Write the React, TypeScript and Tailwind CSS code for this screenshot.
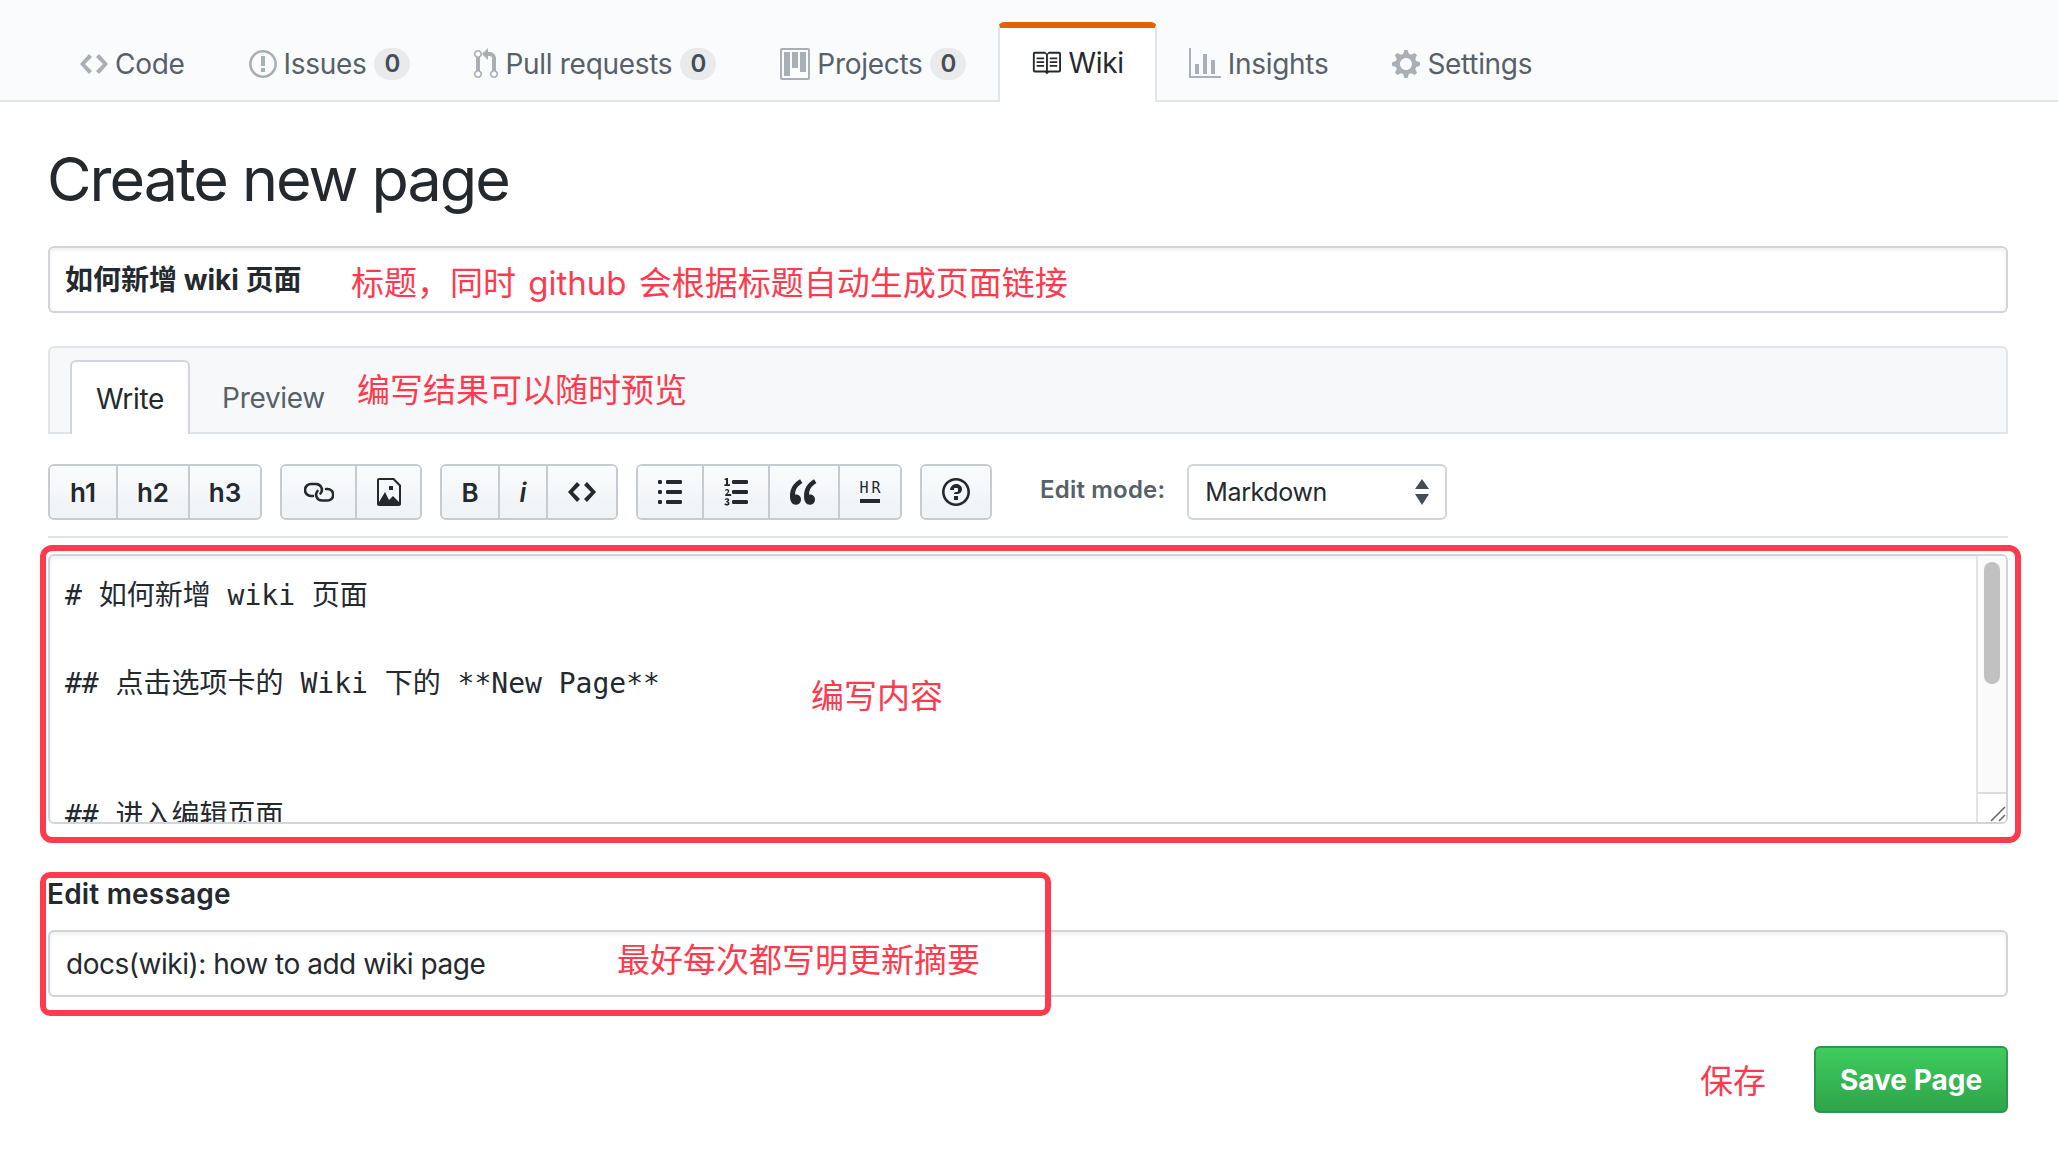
import React from "react";

const P = {
  code: "M9.5 3L8 4.5 11.5 8 8 11.5 9.5 13 14 8 9.5 3zm-5 0L0 8l4.5 5L6 11.5 2.5 8 6 4.5 4.5 3z",
  issue: "M7 2.3c3.14 0 5.7 2.56 5.7 5.7s-2.56 5.7-5.7 5.7A5.71 5.71 0 011.3 8c0-3.14 2.56-5.7 5.7-5.7zM7 1C3.14 1 0 4.14 0 8s3.14 7 7 7 7-3.14 7-7-3.14-7-7-7zm1 3H6v5h2V4zm0 6H6v2h2v-2z",
  pull: "M11 11.28V5c-.03-.78-.34-1.47-.94-2.06C9.46 2.35 8.78 2.03 8 2H7V0L4 3l3 3V4h1c.27.02.48.11.69.31.21.2.3.42.31.69v6.28A1.993 1.993 0 0010 15a1.993 1.993 0 001-3.72zm-1 2.92c-.66 0-1.2-.55-1.2-1.2 0-.65.55-1.2 1.2-1.2.65 0 1.2.55 1.2 1.2 0 .65-.55 1.2-1.2 1.2zM4 3c0-1.11-.89-2-2-2a1.993 1.993 0 00-1 3.72v6.56A1.993 1.993 0 002 15a1.993 1.993 0 001-3.72V4.72c.59-.34 1-.98 1-1.72zm-.8 10c0 .66-.55 1.2-1.2 1.2-.65 0-1.2-.55-1.2-1.2 0-.65.55-1.2 1.2-1.2.65 0 1.2.55 1.2 1.2zM2 4.2C1.34 4.2.8 3.65.8 3c0-.65.55-1.2 1.2-1.2.65 0 1.2.55 1.2 1.2 0 .65-.55 1.2-1.2 1.2z",
  project: "M10 12h3V2h-3v10zm-4-2h3V2H6v8zm-4 4h3V2H2v12zm-1 1h13V1H1v14zM14 0H1a1 1 0 00-1 1v14a1 1 0 001 1h13a1 1 0 001-1V1a1 1 0 00-1-1z",
  book: "M3 5h4v1H3V5zm0 3h4V7H3v1zm0 2h4V9H3v1zm11-5h-4v1h4V5zm0 2h-4v1h4V7zm0 2h-4v1h4V9zm2-6v9c0 .55-.45 1-1 1H9.5l-1 1-1-1H2c-.55 0-1-.45-1-1V3c0-.55.45-1 1-1h5.5l1 1 1-1H15c.55 0 1 .45 1 1zm-8 .5L7.5 3H2v9h6V3.5zm7-.5H9.5l-.5.5V12h6V3z",
  graph: "M16 14v1H0V0h1v14h15zM5 13H3V8h2v5zm4 0H7V3h2v10zm4 0h-2V6h2v7z",
  gear: "M14 8.77v-1.6l-1.94-.64-.45-1.09.88-1.84-1.13-1.13-1.81.91-1.09-.45-.69-1.92h-1.6l-.63 1.94-1.11.45-1.84-.88-1.13 1.13.91 1.81-.45 1.09L0 7.23v1.59l1.94.64.45 1.09-.88 1.84 1.13 1.13 1.81-.91 1.09.45.69 1.92h1.59l.63-1.94 1.11-.45 1.84.88 1.13-1.13-.92-1.81.47-1.09L14 8.75v.02zM7 11c-1.66 0-3-1.34-3-3s1.34-3 3-3 3 1.34 3 3-1.34 3-3 3z",
  media: "M6 5h2v2H6V5zm6-.5V14c0 .55-.45 1-1 1H1c-.55 0-1-.45-1-1V2c0-.55.45-1 1-1h7.5L12 4.5zM11 5L8 2H1v11l3-5 2 4 2-2 3 3V5z",
  ul: "M2 13c0 .59 0 1-.59 1H.59C0 14 0 13.59 0 13c0-.59 0-1 .59-1h.81c.59 0 .59.41.59 1H2zm2.59-9h6.81c.59 0 .59-.41.59-1 0-.59 0-1-.59-1H4.59C4 2 4 2.41 4 3c0 .59 0 1 .59 1zM1.41 7H.59C0 7 0 7.41 0 8c0 .59 0 1 .59 1h.81c.59 0 .59-.41.59-1 0-.59 0-1-.59-1h.01zm0-5H.59C0 2 0 2.41 0 3c0 .59 0 1 .59 1h.81c.59 0 .59-.41.59-1 0-.59 0-1-.59-1h.01zm10 5H4.59C4 7 4 7.41 4 8c0 .59 0 1 .59 1h6.81c.59 0 .59-.41.59-1 0-.59 0-1-.59-1h.01zm0 5H4.59C4 12 4 12.41 4 13c0 .59 0 1 .59 1h6.81c.59 0 .59-.41.59-1 0-.59 0-1-.59-1h.01z",
  ol: "M12.01 13c0 .59 0 1-.59 1H4.6c-.59 0-.59-.41-.59-1 0-.59 0-1 .59-1h6.81c.59 0 .59.41.59 1h.01zM4.6 4h6.81C12 4 12 3.59 12 3c0-.59 0-1-.59-1H4.6c-.59 0-.59.41-.59 1 0 .59 0 1 .59 1zm6.81 3H4.6c-.59 0-.59.41-.59 1 0 .59 0 1 .59 1h6.81c.59 0 .59-.41.59-1 0-.59 0-1-.59-1zm-9.4-6h-.72c-.3.19-.58.25-1.03.34V2h.75v2.14H.17V5h2.84v-.86h-1V1zm.19 8.06c-.17 0-.42.02-.61.05.48-.5 1.02-1.06 1.02-1.61-.02-.61-.44-1-1.06-1-.47 0-.77.16-1.08.48l.48.48c.16-.16.33-.3.53-.3.27 0 .44.16.44.44 0 .44-.61 1-1.33 1.69V10h3v-.94h-.39zm-.2 3.84v-.02c.44-.2.66-.48.66-.86 0-.61-.5-.94-1.2-.94-.42 0-.78.17-1.13.44l.45.53c.22-.19.42-.3.64-.3.25 0 .39.12.39.34 0 .25-.19.42-.75.42v.67c.67 0 .83.17.83.45 0 .25-.22.38-.55.38-.28 0-.55-.14-.78-.36l-.41.56c.3.34.72.55 1.3.55.72 0 1.31-.38 1.31-1.05 0-.45-.3-.72-.75-.81z",
  quote: "M6.16 3.5C3.73 5.06 2.55 6.67 2.55 9.36c.16-.05.3-.05.44-.05 1.27 0 2.5.86 2.5 2.41 0 1.61-1.03 2.61-2.5 2.61-1.9 0-2.99-1.52-2.99-4.25 0-3.8 1.75-6.53 5.02-8.42L6.16 3.5zm7 0c-2.43 1.56-3.61 3.17-3.61 5.86.16-.05.3-.05.44-.05 1.27 0 2.5.86 2.5 2.41 0 1.61-1.03 2.61-2.5 2.61-1.89 0-2.98-1.52-2.98-4.25 0-3.8 1.75-6.53 5.02-8.42l1.14 1.84h-.01z",
  question: "M6 10h2v2H6v-2zm4-3.5C10 8.64 8 9 8 9H6c0-.55.45-1 1-1h.5c.28 0 .5-.22.5-.5v-1c0-.28-.22-.5-.5-.5h-1c-.28 0-.5.22-.5.5V7H4c0-1.5 1.5-3 3-3s3 1 3 2.5zM7 2.3c3.14 0 5.7 2.56 5.7 5.7S10.14 13.7 7 13.7 1.3 11.14 1.3 8 3.86 2.3 7 2.3zM7 1C3.14 1 0 4.14 0 8s3.14 7 7 7 7-3.14 7-7-3.14-7-7-7z",
};

function Oct({ d, vw, w, h, className }: { d: string; vw: number; w: number; h: number; className: string }) {
  return (
    <svg viewBox={`0 0 ${vw} 16`} width={w} height={h} className={className} fill="currentColor">
      <path d={d} fillRule="evenodd" />
    </svg>
  );
}

function Tab({ d, vw, w, label, count, active }: { d: string; vw: number; w: number; label: string; count?: string; active?: boolean }) {
  return (
    <div
      className={
        active
          ? "flex h-[80px] items-center gap-[7px] rounded-t-[6px] border-x-2 border-t-[6px] border-x-[#e1e4e8] border-t-[#e36209] bg-white px-[31px] pb-[4px] -mb-[2px] text-[#24292e]"
          : "flex h-[80px] items-center gap-[7px] px-[32px] pt-[10px] pb-[2px] text-[#586069]"
      }
    >
      <Oct d={d} vw={vw} w={w} h={32} className={active ? "text-[#24292e]" : "text-[#a9afb6]"} />
      <span className="text-[28px] leading-[36px] tracking-[-0.3px]">{label}</span>
      {count && (
        <span className="ml-[1px] flex h-[32px] w-[36px] items-center justify-center rounded-full bg-[#e9eaec] text-[24px] font-semibold text-[#444d56]">
          {count}
        </span>
      )}
    </div>
  );
}

const btn =
  "flex h-full items-center justify-center border-r-2 border-[#c6cbd1] bg-gradient-to-b from-[#fafbfc] to-[#eff3f6] text-[26px] font-semibold text-[#24292e] last:border-r-0";

function Group({ children }: { children: React.ReactNode }) {
  return <div className="flex h-[56px] overflow-hidden rounded-[6px] border-2 border-[#c6cbd1]">{children}</div>;
}

const red = "text-[33px] leading-[40px] text-[#fe3b4e] font-normal";

export default function App() {
  return (
    <div className="min-h-[1154px] w-[2058px] bg-white font-['Inter','Noto_Sans_CJK_SC',sans-serif] text-[#24292e]">
      <div className="flex h-[102px] items-end border-b-2 border-[#e1e4e8] bg-[#fafbfc] pl-[48px]">
        <Tab d={P.code} vw={14} w={28} label="Code" />
        <Tab d={P.issue} vw={14} w={28} label="Issues" count="0" />
        <Tab d={P.pull} vw={12} w={24} label="Pull requests" count="0" />
        <Tab d={P.project} vw={15} w={30} label="Projects" count="0" />
        <Tab d={P.book} vw={16} w={30} label="Wiki" active />
        <Tab d={P.graph} vw={16} w={32} label="Insights" />
        <Tab d={P.gear} vw={14} w={28} label="Settings" />
      </div>

      <div className="relative pl-[48px] pr-[50px]">
        <h1 className="-ml-[1px] flex h-[144px] items-center pt-[12px] text-[61px] font-normal tracking-[-2px] text-[#24292e]">
          Create new page
        </h1>

        <div className="flex h-[67px] items-center rounded-[6px] border-2 border-[#d1d5da] bg-white pl-[15px] shadow-[inset_0_2px_4px_rgba(27,31,35,0.075)]">
          <span className="w-[286px] text-[28px] font-bold">如何新增 wiki 页面</span>
          <span className={red + " pt-[7px] [word-spacing:3px]"}>标题，同时 github 会根据标题自动生成页面链接</span>
        </div>

        <div className="mt-[33px] flex h-[88px] items-end rounded-t-[6px] border-2 border-[#e1e4e8] bg-[#f6f8fa] pl-[20px]">
          <div className="-mb-[2px] flex h-[74px] w-[120px] items-center justify-center rounded-t-[6px] border-x-2 border-t-2 border-[#d1d5da] bg-white pt-[2px] text-[28px] tracking-[-0.3px]">
            Write
          </div>
          <div className="flex h-[74px] w-[167px] items-center justify-center pt-[6px] text-[28px] tracking-[-0.3px] text-[#586069]">
            Preview
          </div>
          <span className={red + " mb-[16px] self-end pb-[6px]"}>编写结果可以随时预览</span>
        </div>

        <div className="mt-[30px] flex h-[56px] items-center">
          <Group>
            <div className={btn + " w-[68px]"}>h1</div>
            <div className={btn + " w-[72px]"}>h2</div>
            <div className={btn + " w-[70px]"}>h3</div>
          </Group>
          <div className="ml-[18px]">
            <Group>
              <div className={btn + " w-[75px]"}>
                <svg viewBox="0 0 30 20" width="30" height="20" fill="none" stroke="#24292e" strokeWidth="2.6" strokeLinecap="round">
                  <path d="M9 14H7A5.8 5.8 0 0 1 7 2H12A5.8 5.8 0 0 1 16.5 11.5" />
                  <path d="M22 7H23.5A5.7 5.7 0 0 1 23.5 18.5H18A5.8 5.8 0 0 1 13.5 9" />
                </svg>
              </div>
              <div className={btn + " w-[63px]"}>
                <Oct d={P.media} vw={12} w={24} h={32} className="text-[#24292e]" />
              </div>
            </Group>
          </div>
          <div className="ml-[18px]">
            <Group>
              <div className={btn + " w-[58px] font-bold"}>B</div>
              <div className={btn + " w-[48px] font-bold italic"}>i</div>
              <div className={btn + " w-[68px]"}>
                <Oct d={P.code} vw={14} w={28} h={32} className="text-[#24292e]" />
              </div>
            </Group>
          </div>
          <div className="ml-[18px]">
            <Group>
              <div className={btn + " w-[66px]"}>
                <Oct d={P.ul} vw={12} w={24} h={32} className="text-[#24292e]" />
              </div>
              <div className={btn + " w-[66px]"}>
                <Oct d={P.ol} vw={12} w={24} h={32} className="text-[#24292e]" />
              </div>
              <div className={btn + " w-[70px]"}>
                <Oct d={P.quote} vw={14} w={28} h={32} className="text-[#24292e]" />
              </div>
              <div className={btn + " w-[60px]"}>
                <div className="flex flex-col items-center font-['DejaVu_Sans_Mono',monospace] text-[15px] font-normal leading-[14px]">
                  <span className="-mr-[3px] tracking-[3px]">HR</span>
                  <div className="mt-[4px] h-[4px] w-[20px] bg-[#24292e]" />
                </div>
              </div>
            </Group>
          </div>
          <div className="ml-[18px]">
            <Group>
              <div className={btn + " w-[68px]"}>
                <Oct d={P.question} vw={14} w={28} h={32} className="text-[#24292e]" />
              </div>
            </Group>
          </div>
          <span className="ml-[48px] pb-[4px] text-[24px] font-semibold tracking-[0.2px] text-[#586069]">Edit mode:</span>
          <div className="ml-[22px] flex h-[56px] w-[260px] items-center justify-between rounded-[6px] border-2 border-[#d1d5da] bg-white pb-[1px] pl-[16px] pr-[15px] text-[25px] tracking-[-0.4px]">
            <span className="pt-[2px]">Markdown</span>
            <svg viewBox="0 0 16 28" width="16" height="28" fill="#444d56">
              <path d="M8 1l7 10H1z" />
              <path d="M8 27l7-11H1z" />
            </svg>
          </div>
        </div>

        <div className="mt-[16px] h-[2px] bg-[#e1e4e8]" />

        <div className="relative mt-[16px]">
          <div className="flex h-[270px] overflow-hidden rounded-[6px] border-2 border-[#d1d5da] bg-white shadow-[inset_0_2px_4px_rgba(27,31,35,0.075)]">
            <div className="flex-1 overflow-hidden pl-[15px] pt-[18px] font-['DejaVu_Sans_Mono','Noto_Sans_CJK_SC',monospace] text-[28px] leading-[44px] whitespace-pre">
              {"# 如何新增 wiki 页面\n\n## 点击选项卡的 Wiki 下的 **New Page**\n\n\n## 进入编辑页面"}
            </div>
            <div className="flex w-[30px] flex-col border-l-2 border-[#e3e3e3] bg-[#fafafa]">
              <div className="flex-1 pl-[6px] pt-[6px]">
                <div className="h-[122px] w-[16px] rounded-full bg-[#c1c1c1]" />
              </div>
              <div className="flex h-[30px] items-end justify-end border-t-2 border-[#dcdcdc] bg-white">
                <svg viewBox="0 0 16 16" width="16" height="16" stroke="#666" strokeWidth="1.5">
                  <path d="M1 15L15 1M9 15l6-6" />
                </svg>
              </div>
            </div>
          </div>
          <span className={red + " absolute left-[763px] top-[122px]"}>编写内容</span>
          <div className="pointer-events-none absolute -left-[8px] -right-[13px] -top-[9px] -bottom-[19px] rounded-[12px] border-[6px] border-[#fe3b4e]" />
        </div>

        <div className="relative">
          <div className="mt-[52px] -ml-[1px] h-[54px] text-[28px] font-semibold leading-[36px] tracking-[0.2px]">Edit message</div>
          <div className="flex h-[67px] items-center rounded-[6px] border-2 border-[#d1d5da] bg-white pl-[16px] text-[28px] shadow-[inset_0_2px_4px_rgba(27,31,35,0.075)]">
            <span className="w-[551px] tracking-[-0.47px]">docs(wiki): how to add wiki page</span>
            <span className={red + " pb-[8px]"}>最好每次都写明更新摘要</span>
          </div>
          <div className="pointer-events-none absolute -left-[8px] top-[-4px] h-[144px] w-[1011px] rounded-[10px] border-[6px] border-[#fe3b4e]" />
        </div>

        <div className="mt-[49px] flex items-center justify-end">
          <span className={red + " mr-[48px] pt-[2px]"}>保存</span>
          <div className="flex h-[67px] w-[194px] items-center justify-center rounded-[6px] border-2 border-[#2c974b] bg-gradient-to-b from-[#3fcc5e] to-[#2fa44a] text-[28px] font-bold text-white">
            Save Page
          </div>
        </div>
      </div>
    </div>
  );
}
